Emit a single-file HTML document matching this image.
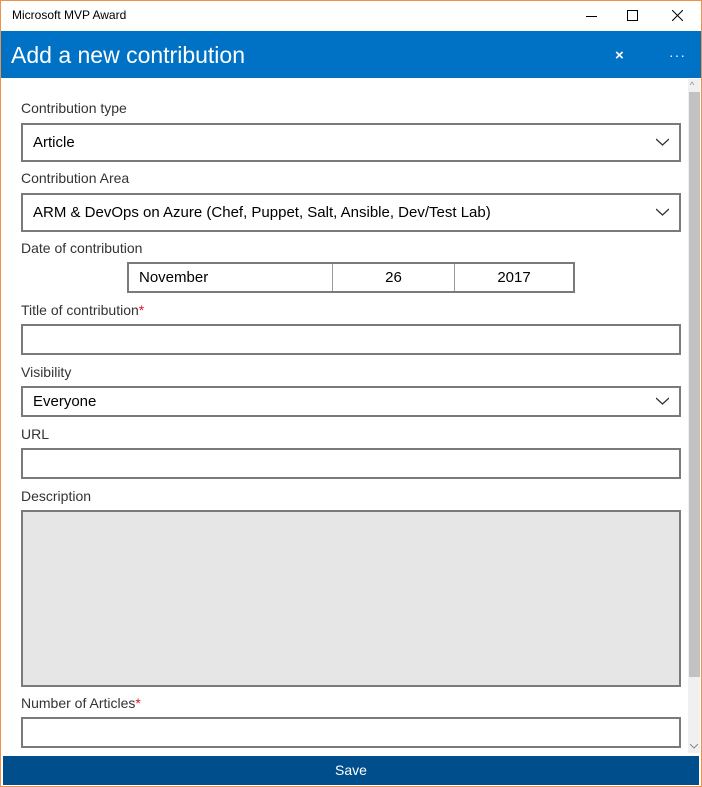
<!DOCTYPE html>
<html><head><style>
*{margin:0;padding:0;box-sizing:border-box}
body{width:702px;height:787px;overflow:hidden;background:#fff;font-family:"Segoe UI","Liberation Sans",sans-serif;position:relative}
.win{position:absolute;left:0;top:0;width:702px;height:787px;border:1px solid #f0914a}
.abs{position:absolute}
.lbl{position:absolute;left:21px;font-size:14px;color:#333}
.box{position:absolute;left:21px;width:660px;border:2px solid #7a7a7a;background:#fff;font-size:15px;color:#000;padding-left:10px;display:flex;align-items:center}
.chev{position:absolute;right:10px;top:50%;margin-top:-5px}
.red{color:#e81123}
</style></head><body>
<div class="win"></div>
<div class="abs" style="left:12px;top:8px;font-size:12px;color:#000">Microsoft MVP Award</div>
<div class="abs" style="left:586px;top:16px;width:11px;height:1px;background:#000"></div>
<div class="abs" style="left:627px;top:10px;width:11px;height:11px;border:1px solid #000"></div>
<svg class="abs" style="left:672px;top:10px" width="11" height="11"><path d="M0 0L11 11M11 0L0 11" stroke="#000" stroke-width="1"/></svg>
<div class="abs" style="left:1px;top:31px;width:700px;height:47px;background:#0072c6"></div>
<div class="abs" style="left:11px;top:42px;font-size:23px;color:#fff;font-weight:300">Add a new contribution</div>
<div class="abs" style="left:615px;top:47px;font-size:15px;color:#fff;font-weight:bold">×</div>
<div class="abs" style="left:669px;top:47px;font-size:14px;color:#fff;letter-spacing:1px">···</div>
<div class="abs" style="left:688px;top:79px;width:12px;height:674px;background:#f0f0f0"></div>
<div class="abs" style="left:689px;top:92px;width:11px;height:585px;background:#c2c2c2"></div>
<div class="abs" style="left:690px;top:80px;font-size:9px;color:#888">^</div>
<svg class="abs" style="left:690px;top:744px" width="8" height="5"><path d="M0 0L4 4L8 0" stroke="#888" fill="none"/></svg>

<div class="lbl" style="top:100px">Contribution type</div>
<div class="box" style="top:123px;height:39px">Article<svg class="chev" width="13" height="8"><path d="M0 1L6.5 7L13 1" stroke="#333" fill="none" stroke-width="1.3"/></svg></div>
<div class="lbl" style="top:170px">Contribution Area</div>
<div class="box" style="top:193px;height:39px">ARM &amp; DevOps on Azure (Chef, Puppet, Salt, Ansible, Dev/Test Lab)<svg class="chev" width="13" height="8"><path d="M0 1L6.5 7L13 1" stroke="#333" fill="none" stroke-width="1.3"/></svg></div>
<div class="lbl" style="top:240px">Date of contribution</div>
<div class="abs" style="left:127px;top:262px;width:448px;height:31px;border:2px solid #7a7a7a;display:flex;font-size:15px">
<div style="width:204px;border-right:1px solid #999;padding-left:10px;line-height:27px">November</div>
<div style="width:122px;border-right:1px solid #999;text-align:center;line-height:27px">26</div>
<div style="flex:1;text-align:center;line-height:27px">2017</div></div>
<div class="lbl" style="top:302px">Title of contribution<span class="red">*</span></div>
<div class="box" style="top:324px;height:31px"></div>
<div class="lbl" style="top:364px">Visibility</div>
<div class="box" style="top:386px;height:31px">Everyone<svg class="chev" width="13" height="8"><path d="M0 1L6.5 7L13 1" stroke="#333" fill="none" stroke-width="1.3"/></svg></div>
<div class="lbl" style="top:426px">URL</div>
<div class="box" style="top:448px;height:31px"></div>
<div class="lbl" style="top:488px">Description</div>
<div class="box" style="top:510px;height:177px;background:#e6e6e6"></div>
<div class="lbl" style="top:695px">Number of Articles<span class="red">*</span></div>
<div class="box" style="top:717px;height:31px"></div>
<div class="abs" style="left:3px;top:756px;width:696px;height:29px;background:#004e8c;color:#fff;font-size:14px;text-align:center;line-height:29px">Save</div>
</body></html>
